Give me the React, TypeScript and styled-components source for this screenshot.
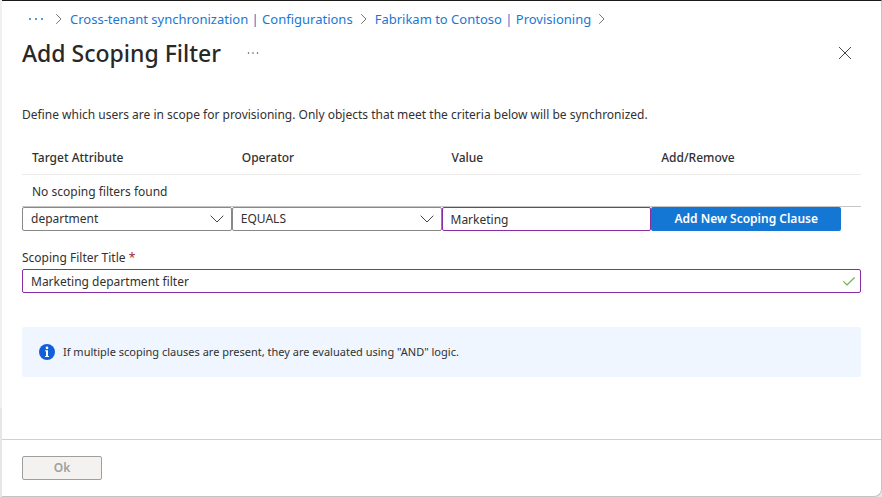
import React, { useState } from "react";
import styled, { createGlobalStyle } from "styled-components";

const GlobalStyle = createGlobalStyle`
  *, *::before, *::after { box-sizing: border-box; }
  body {
    margin: 0;
    background: #fff;
    color: #323130;
    font-family: "Noto Sans", "Open Sans", sans-serif;
    font-size: 12px;
    line-height: 18px;
  }
  button, input, select { font: inherit; color: inherit; }
`;

const Backdrop = styled.div`
  display: flex;
  min-height: 100vh;
  padding-left: 2px;
  background: linear-gradient(#f0f0f0 0 82%, #e6e6e6 82%);
`;

const Blade = styled.main`
  display: flex;
  flex: 1;
  flex-direction: column;
  min-width: 0;
  background: #fff;
  border: solid #c4c4c4;
  border-width: 1px 1px 1px 0;
  border-top-color: #1b1a19;
  border-bottom-right-radius: 8px;
`;

const Header = styled.header`
  padding: 8px 20px 0;
`;

const Breadcrumb = styled.nav`
  display: flex;
  align-items: center;
  height: 20px;
  padding-left: 6px;
  font-size: 13px;
  white-space: nowrap;
`;

const Crumb = styled.a`
  color: #1a78d4;
  text-decoration: none;
  &:hover { text-decoration: underline; }
`;

const OverflowCrumb = styled.button`
  display: flex;
  width: 20px;
  padding: 0;
  border: 0;
  background: none;
  color: #1a78d4;
`;

const SeparatorIcon = styled.svg`
  flex: none;
  margin: 0 8px 0 7px;
`;

const TitleBar = styled.div`
  display: flex;
  align-items: center;
  height: 48px;
`;

const Title = styled.h1`
  margin: 0;
  color: #292827;
  font-size: 23px;
  font-weight: 500;
  line-height: 32px;
`;

const IconButton = styled.button<{ $push?: boolean }>`
  display: flex;
  align-items: center;
  justify-content: center;
  width: 32px;
  height: 32px;
  margin-left: ${(p) => (p.$push ? "auto" : "16px")};
  padding: 0;
  border: 0;
  background: none;
  color: #484644;
`;

const Content = styled.section`
  flex: 1;
  padding: 29px 20px 0;
`;

const Description = styled.p`
  margin: 0 0 16px;
`;

const ClauseTable = styled.table`
  width: 100%;
  table-layout: fixed;
  border-collapse: separate;
  border-spacing: 0;
`;

const HeadCell = styled.th`
  height: 35px;
  padding: 2px 10px 0;
  border-bottom: 1px solid #edebe9;
  font-weight: 500;
  text-align: left;
`;

const EmptyCell = styled.td`
  height: 32px;
  padding: 2px 10px 0;
  border-bottom: 1px solid #c8c6c4;
`;

const EditorCell = styled.td`
  padding: 0;
`;

const Field = styled.div`
  position: relative;
  display: flex;
`;

const FieldIcon = styled.span<{ $right: number }>`
  position: absolute;
  top: 0;
  right: ${(p) => p.$right}px;
  display: flex;
  align-items: center;
  height: 100%;
  pointer-events: none;
`;

const SelectBox = styled.select`
  appearance: none;
  width: 100%;
  height: 24px;
  padding: 0 32px 0 8px;
  border: 1px solid #8a8886;
  border-radius: 2px;
  background: #fff;
`;

const TextBox = styled.input`
  width: 100%;
  height: 24px;
  padding: 0 8px;
  border: 1px solid #8a2da5;
  border-radius: 2px;
  background: #fff;
  outline: none;
`;

const PrimaryButton = styled.button`
  display: block;
  width: 190px;
  max-width: 100%;
  height: 24px;
  padding: 0;
  border: 0;
  border-radius: 2px;
  background: #1477d4;
  color: #fff;
  font-weight: 600;
  line-height: 22px;
  white-space: nowrap;
`;

const FieldLabel = styled.label`
  display: block;
  margin: 18px 0 2px;
`;

const Required = styled.span`
  color: #a4262c;
`;

const InfoBox = styled.aside`
  display: flex;
  align-items: center;
  gap: 8px;
  min-height: 50px;
  margin-top: 34px;
  padding: 0 17px;
  border-radius: 2px;
  background: #eff6ff;
  font-size: 11px;
`;

const Footer = styled.footer`
  padding: 16px 20px;
  border-top: 1px solid #d2d0ce;
`;

const OkButton = styled.button`
  display: block;
  width: 80px;
  height: 24px;
  padding: 0;
  border: 1px solid #a19f9d;
  border-radius: 2px;
  background: #f3f2f1;
  color: #a19f9d;
  font-weight: 600;
  line-height: 20px;
`;

const Dots = ({ width }: { width: number }) => (
  <svg width={width} height="4" viewBox="0 0 16 4" fill="currentColor" aria-hidden="true">
    <circle cx="2" cy="2" r="1" />
    <circle cx="8" cy="2" r="1" />
    <circle cx="14" cy="2" r="1" />
  </svg>
);

const Separator = () => (
  <SeparatorIcon width="7" height="12" viewBox="0 0 7 12" fill="none" stroke="#797775" aria-hidden="true">
    <path d="M1.2 1.2L6 6l-4.8 4.8" />
  </SeparatorIcon>
);

const Chevron = () => (
  <svg width="14" height="8" viewBox="0 0 14 8" fill="none" stroke="#484644" aria-hidden="true">
    <path d="M.7.7L7 7 13.3.7" />
  </svg>
);

const Close = () => (
  <svg width="14" height="14" viewBox="0 0 14 14" fill="none" stroke="currentColor" aria-hidden="true">
    <path d="M1 1l12 12M13 1L1 13" />
  </svg>
);

const Check = () => (
  <svg width="12" height="9" viewBox="0 0 12 9" fill="none" stroke="#6bb340" strokeWidth="1.2" aria-hidden="true">
    <path d="M.4 4.4L4 8 11.6.5" />
  </svg>
);

const Info = () => (
  <svg width="16" height="16" viewBox="0 0 16 16" aria-hidden="true">
    <circle cx="8" cy="8" r="8" fill="#1160d8" />
    <circle cx="8" cy="3.9" r="1.3" fill="#fff" />
    <path d="M6 6.3h3V12h1v1H6v-1h1V7.3H6z" fill="#fff" />
  </svg>
);

const columns = ["Target Attribute", "Operator", "Value", "Add/Remove"];

export default function App() {
  const [attribute, setAttribute] = useState("department");
  const [operator, setOperator] = useState("EQUALS");
  const [value, setValue] = useState("Marketing");
  const [title, setTitle] = useState("Marketing department filter");

  return (
    <>
      <GlobalStyle />
      <Backdrop>
        <Blade>
          <Header>
            <Breadcrumb aria-label="Breadcrumb">
              <OverflowCrumb type="button" aria-label="More breadcrumbs">
                <Dots width={16} />
              </OverflowCrumb>
              <Separator />
              <Crumb href="#configurations">Cross-tenant synchronization | Configurations</Crumb>
              <Separator />
              <Crumb href="#provisioning">Fabrikam to Contoso | Provisioning</Crumb>
              <Separator />
            </Breadcrumb>
            <TitleBar>
              <Title>Add Scoping Filter</Title>
              <IconButton type="button" aria-label="More actions">
                <Dots width={12} />
              </IconButton>
              <IconButton type="button" aria-label="Close" $push>
                <Close />
              </IconButton>
            </TitleBar>
          </Header>

          <Content>
            <Description>
              Define which users are in scope for provisioning. Only objects that meet the criteria below will be
              synchronized.
            </Description>
            <ClauseTable>
              <thead>
                <tr>
                  {columns.map((name) => (
                    <HeadCell key={name} scope="col">
                      {name}
                    </HeadCell>
                  ))}
                </tr>
              </thead>
              <tbody>
                <tr>
                  <EmptyCell colSpan={4}>No scoping filters found</EmptyCell>
                </tr>
                <tr>
                  <EditorCell>
                    <Field>
                      <SelectBox
                        aria-label="Target Attribute"
                        value={attribute}
                        onChange={(e) => setAttribute(e.target.value)}
                      >
                        <option>department</option>
                      </SelectBox>
                      <FieldIcon $right={8}>
                        <Chevron />
                      </FieldIcon>
                    </Field>
                  </EditorCell>
                  <EditorCell>
                    <Field>
                      <SelectBox aria-label="Operator" value={operator} onChange={(e) => setOperator(e.target.value)}>
                        <option>EQUALS</option>
                      </SelectBox>
                      <FieldIcon $right={8}>
                        <Chevron />
                      </FieldIcon>
                    </Field>
                  </EditorCell>
                  <EditorCell>
                    <Field>
                      <TextBox aria-label="Value" value={value} onChange={(e) => setValue(e.target.value)} />
                    </Field>
                  </EditorCell>
                  <EditorCell>
                    <PrimaryButton type="button">Add New Scoping Clause</PrimaryButton>
                  </EditorCell>
                </tr>
              </tbody>
            </ClauseTable>

            <FieldLabel htmlFor="filter-title">
              Scoping Filter Title <Required>*</Required>
            </FieldLabel>
            <Field>
              <TextBox id="filter-title" required value={title} onChange={(e) => setTitle(e.target.value)} />
              <FieldIcon $right={6}>
                <Check />
              </FieldIcon>
            </Field>

            <InfoBox>
              <Info />
              <span>If multiple scoping clauses are present, they are evaluated using "AND" logic.</span>
            </InfoBox>
          </Content>

          <Footer>
            <OkButton type="button" disabled>
              Ok
            </OkButton>
          </Footer>
        </Blade>
      </Backdrop>
    </>
  );
}
